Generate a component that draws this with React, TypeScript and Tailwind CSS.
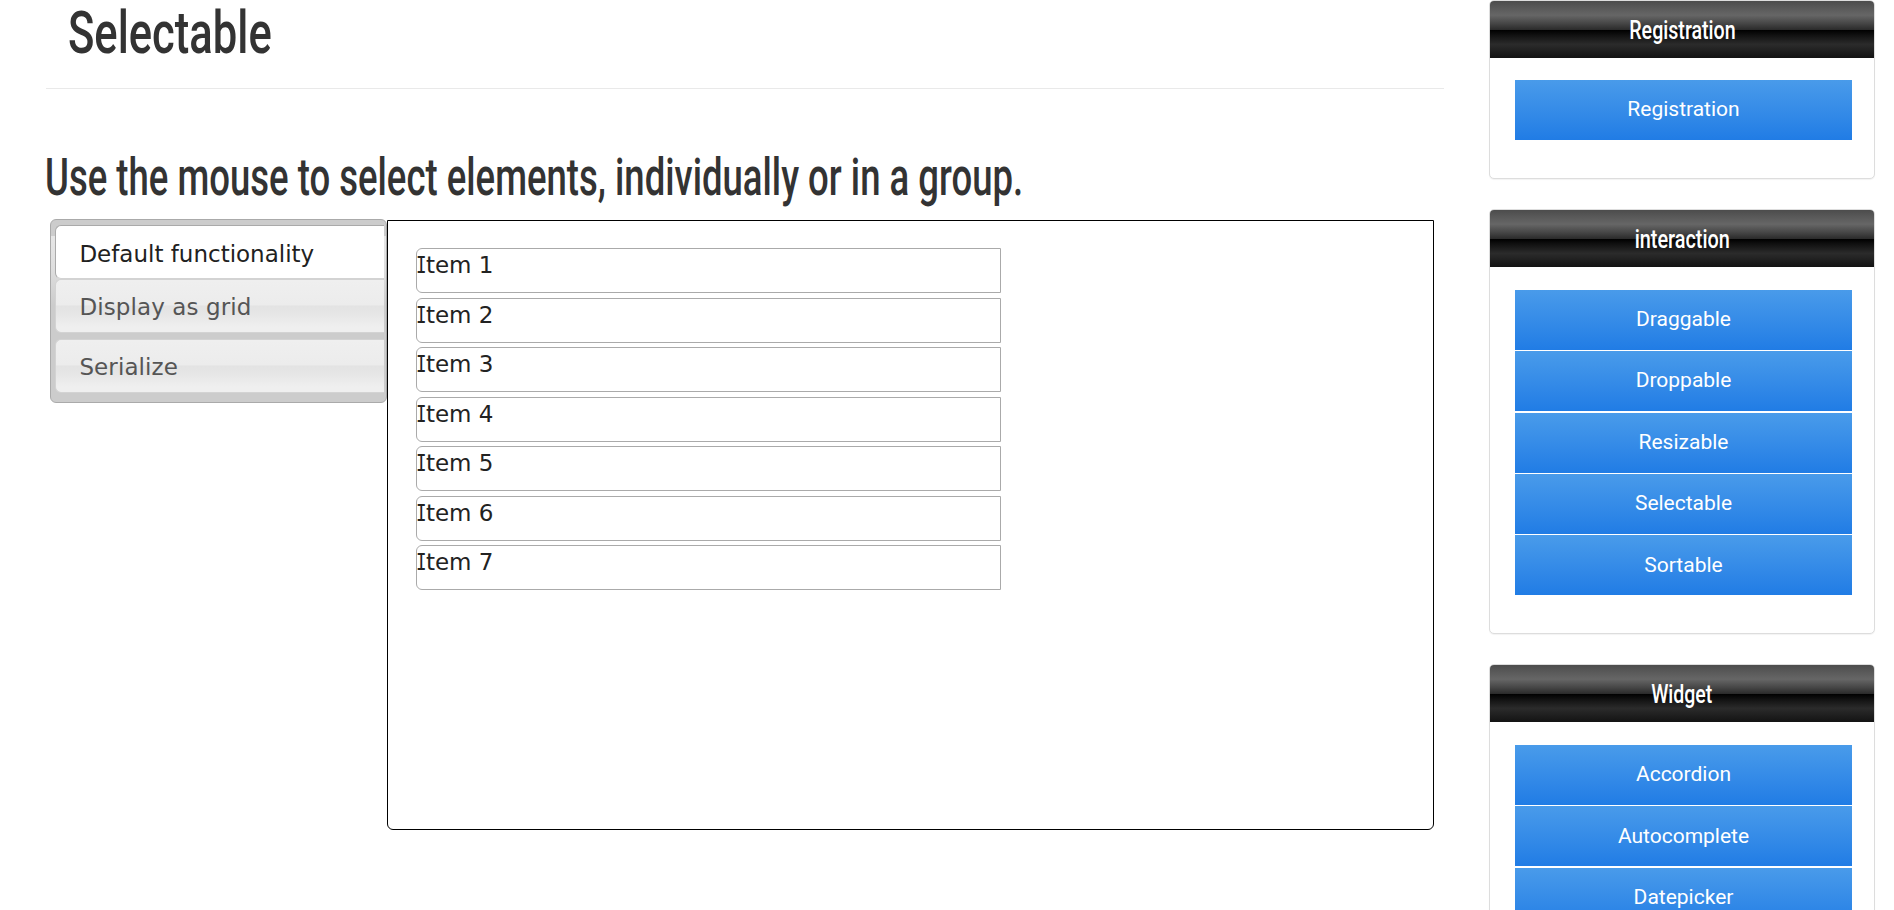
import type { ReactNode } from "react";

const items = ["1", "2", "3", "4", "5", "6", "7"];

function MenuPanel({ title, links, titleClass }: { title: string; links: string[]; titleClass: string }) {
  return (
    <section className="w-[386px] shrink-0 rounded-[5px] border border-[#ddd] bg-white shadow-[0_1px_1px_rgba(0,0,0,0.05)]">
      <h3 className="flex h-[57px] items-center justify-center rounded-t-[4px] bg-[linear-gradient(to_bottom,#4c4c4c_0%,#595959_12%,#666666_25%,#474747_39%,#2c2c2c_50%,#000000_51%,#111111_60%,#2b2b2b_76%,#1c1c1c_91%,#131313_100%)] pt-[2px] text-[26px] font-medium text-white">
        <span className={titleClass}>{title}</span>
      </h3>
      <ul className="flex flex-col gap-[1.43px] pt-[22.6px] pr-[22px] pb-[37.8px] pl-[25px]">
        {links.map((l) => (
          <li key={l} className="flex h-[60px] items-center justify-center bg-linear-to-b from-[#499bea] to-[#207ce5] text-[21px] text-white">
            {l}
          </li>
        ))}
      </ul>
    </section>
  );
}

function Tab({ active, children }: { active?: boolean; children: ReactNode }) {
  return (
    <li
      className={
        active
          ? "flex h-[54px] items-center rounded-l-[6px] border border-r-0 border-[#aaa] border-b-[#d3d3d3] bg-white pl-[23.4px] pt-[4px] text-[#212121]"
          : "flex h-[54px] items-center rounded-l-[6px] border border-r-0 border-[#d3d3d3] bg-[linear-gradient(to_bottom,#efefef_0%,#ececec_48%,#e3e3e3_50%,#e6e6e6_65%,#efefef_90%)] pl-[23.4px] pt-[2px] tracking-[0.1px] text-[#555]"
      }
    >
      {children}
    </li>
  );
}

export default function App() {
  return (
    <div className="flex h-[910px] w-full overflow-hidden bg-white font-['Roboto',sans-serif]">
      <main className="ml-[46px] w-[1398px] shrink-0">
        <h1 className="flex h-[89px] border-b border-[#e9e9e9] pl-[22px] text-[59px] leading-[66px] font-medium text-[#333]">
          <span className="origin-left scale-x-[0.738] whitespace-nowrap">Selectable</span>
        </h1>
        <h2 className="mt-[56px] flex h-[75px] text-[51px] leading-[65px] font-medium text-[#333]">
          <span className="ml-[-1px] origin-left scale-x-[0.716] whitespace-nowrap">
            Use the mouse to select elements, individually or in a group.
          </span>
        </h2>
        <div className="flex items-start pl-[4px] font-['DejaVu_Sans',sans-serif] text-[23px]">
          <ul className="mt-[-1px] h-[184px] w-[337px] rounded-[6px] border border-[#aaa] bg-[linear-gradient(to_bottom,#ccc_16px,#e6e6e6_16px,#dedede_50px,#ccc_85px)] pt-[5px] pr-[2px] pl-[4px]">
            <Tab active>Default functionality</Tab>
            <Tab>Display as grid</Tab>
            <li className="mr-[-2px] ml-[-4px] h-[6px] bg-[#ccc]" />
            <Tab>Serialize</Tab>
          </ul>
          <div className="h-[610px] w-[1047px] rounded-b-[6px] border border-black pt-[27px] pl-[28px] text-[#222]">
            <ol className="flex w-[585px] flex-col gap-[4.5px]">
              {items.map((n) => (
                <li key={n} className="h-[45px] rounded-l-[6px] border border-[#aaa] leading-[33px]">
                  <span className="mr-[-4.4px] ml-[-0.6px] inline-block origin-left scale-x-[0.76] font-['DejaVu_Sans_Mono',monospace]">I</span>
                  {"tem " + n}
                </li>
              ))}
            </ol>
          </div>
        </div>
      </main>
      <aside className="mt-[-0.5px] ml-[45px] flex flex-col gap-[30.2px]">
        <MenuPanel title="Registration" links={["Registration"]} titleClass="scale-x-[0.755]" />
        <MenuPanel
          title="interaction"
          links={["Draggable", "Droppable", "Resizable", "Selectable", "Sortable"]}
          titleClass="scale-x-[0.765]"
        />
        <MenuPanel title="Widget" links={["Accordion", "Autocomplete", "Datepicker"]} titleClass="scale-x-[0.75]" />
      </aside>
    </div>
  );
}
